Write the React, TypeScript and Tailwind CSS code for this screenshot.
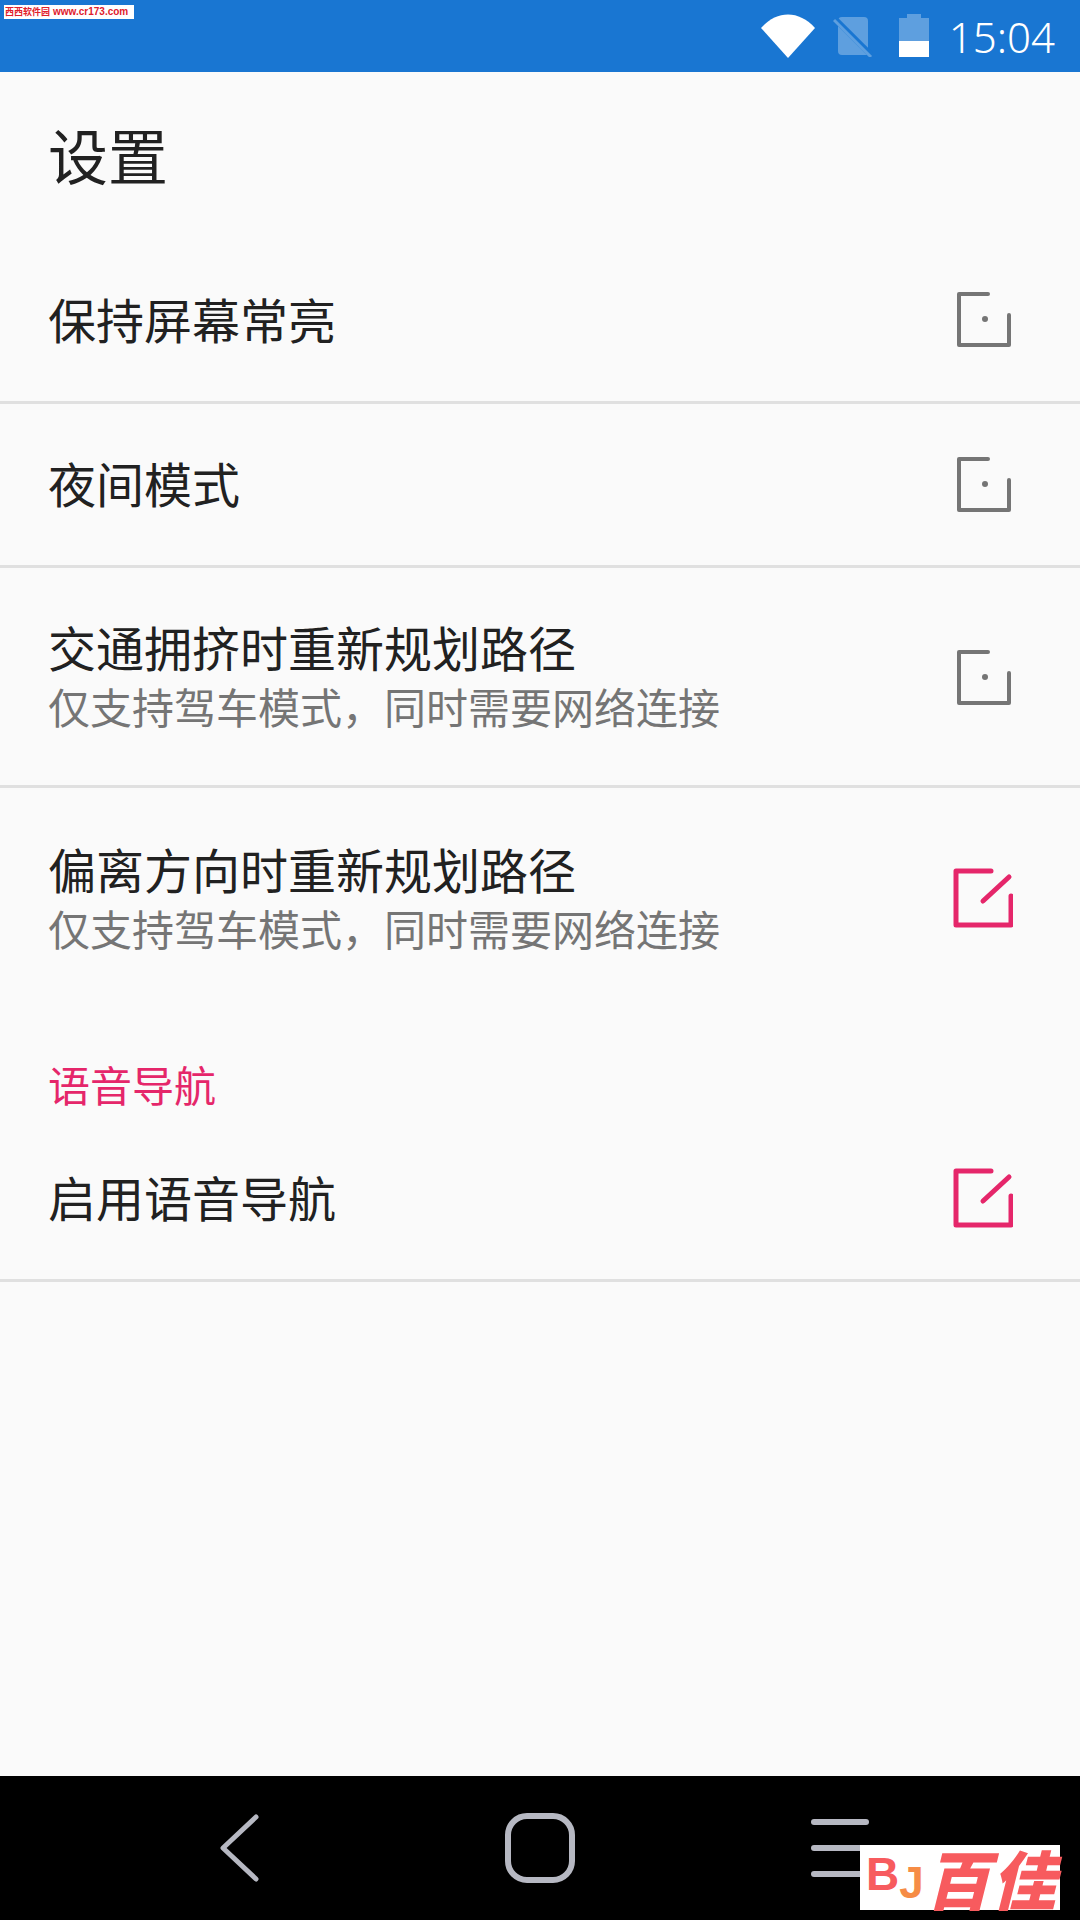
const font = { fontFamily: '"Noto Sans CJK SC", "Noto Sans", sans-serif' };

function Unchecked() {
  return (
    <svg width="60" height="60" viewBox="0 0 60 60" fill="none" stroke="#757575" strokeWidth="4" strokeLinecap="round" strokeLinejoin="round">
      <path d="M35 6H6V57H56V27" />
      <circle cx="32" cy="31" r="3" fill="#757575" stroke="none" />
    </svg>
  );
}

function Checked() {
  return (
    <svg width="60" height="60" viewBox="0 0 60 60" fill="none" stroke="#e5266a" strokeWidth="5" strokeLinecap="round" strokeLinejoin="round">
      <path d="M38 3H3V57H58V28" />
      <path d="M30 33L56 9" />
    </svg>
  );
}

function Row(props: { title: string; sub?: string; checked?: boolean; divider?: boolean; className: string; iconClassName?: string }) {
  return (
    <div className={`flex items-center justify-between pl-[48px] pr-[67px] ${props.className} ${props.divider ? 'border-b-[3px] border-[#e0e0e0]' : ''}`}>
      <div>
        <div className="text-[48px] leading-[60px] text-[#212121]">{props.title}</div>
        {props.sub && <div className="text-[42px] leading-[60px] text-[#757575]">{props.sub}</div>}
      </div>
      <div className={props.iconClassName}>{props.checked ? <Checked /> : <Unchecked />}</div>
    </div>
  );
}

function StatusIcons() {
  return (
    <div className="flex items-center">
      <svg width="54" height="44" viewBox="0 0 54 44" className="mr-[18px]">
        <path d="M27 44L0 14C16 -4 38 -4 54 14Z" fill="#fff" />
      </svg>
      <svg width="40" height="42" viewBox="0 0 40 42" className="mr-[26px]">
        <path d="M9 2H31Q35 2 35 6V40H9Q5 40 5 36V6Q5 2 9 2Z" fill="#fff" fillOpacity="0.3" />
        <path d="M2 4L38 40" stroke="#1976d2" strokeWidth="6" />
        <path d="M1 5L38 42" stroke="#fff" strokeOpacity="0.3" strokeWidth="3" />
      </svg>
      <svg width="30" height="44" viewBox="0 0 30 44" className="mr-[20px]">
        <path d="M8 0H22V4H30V43H0V4H8Z" fill="#fff" fillOpacity="0.3" />
        <path d="M0 27H30V43H0Z" fill="#fff" />
      </svg>
    </div>
  );
}

export default function App() {
  return (
    <div className="relative flex flex-col w-[1080px] h-[1920px] bg-[#fafafa]" style={font}>
      {/* Status bar */}
      <div className="relative flex items-center justify-end h-[72px] bg-[#1976d2] pr-[25px]">
        <StatusIcons />
        <span className="text-[42px] text-white font-light" style={{ fontFamily: '"Noto Sans", sans-serif' }}>15:04</span>
        <div className="absolute left-[4px] top-[5px] flex items-center gap-[3px] w-[130px] h-[14px] bg-white px-[1px] text-[9px] leading-[14px] font-bold text-[#e0202c] whitespace-nowrap">
          <span>西西软件园</span>
          <span style={{ fontFamily: '"Liberation Sans", sans-serif' }} className="text-[10px]">www.cr173.com</span>
        </div>
      </div>

      {/* Title */}
      <div className="flex items-center h-[170px] pl-[48px] pb-[6px] text-[60px] text-[#212121]">设置</div>

      {/* Settings list */}
      <Row title="保持屏幕常亮" className="h-[162px] pb-[7px]" divider />
      <Row title="夜间模式" className="h-[164px] pb-[5px]" iconClassName="mt-[1px]" divider />
      <Row title="交通拥挤时重新规划路径" sub="仅支持驾车模式，同时需要网络连接" className="h-[220px] pb-[1px]" divider />
      <Row title="偏离方向时重新规划路径" sub="仅支持驾车模式，同时需要网络连接" className="h-[220px] pb-[1px]" checked />

      <div className="flex items-end h-[110px] pl-[48px] pb-[3px] text-[42px] text-[#e5266a]">语音导航</div>
      <Row title="启用语音导航" className="h-[164px] pb-[6px]" iconClassName="mt-[5px]" checked divider />

      <div className="flex-1" />

      {/* Nav bar */}
      <div className="flex items-center justify-center h-[144px] bg-black">
        <div className="flex justify-center w-[300px]">
          <svg width="40" height="68" viewBox="0 0 40 68" fill="none" stroke="#b6b8c2" strokeWidth="5" strokeLinecap="round" strokeLinejoin="round">
            <path d="M36 3L3 34L36 65" />
          </svg>
        </div>
        <div className="flex justify-center w-[300px]">
          <div className="w-[70px] h-[70px] rounded-[22px] border-[6px] border-[#b6b8c2]" />
        </div>
        <div className="flex justify-center w-[300px]">
          <div className="flex flex-col gap-[20px] w-[58px]">
            <div className="h-[6px] rounded-full bg-[#b6b8c2]" />
            <div className="h-[6px] rounded-full bg-[#b6b8c2]" />
            <div className="h-[6px] rounded-full bg-[#b6b8c2]" />
          </div>
        </div>
      </div>

      {/* Watermark */}
      <div className="absolute left-[860px] top-[1845px] flex items-center w-[200px] h-[65px] bg-white pl-[6px] whitespace-nowrap">
        <span className="text-[46px] leading-[50px] font-black text-[#f75b5e] -mt-[8px]" style={{ fontFamily: '"Liberation Sans", sans-serif' }}>B</span>
        <span className="text-[44px] leading-[50px] font-black text-[#f68c45] mt-[10px]" style={{ fontFamily: '"Liberation Sans", sans-serif' }}>J</span>
        <span className="text-[64px] leading-[65px] font-black italic text-[#f75b5e] ml-[2px] tracking-[2px]">百佳</span>
      </div>
    </div>
  );
}
